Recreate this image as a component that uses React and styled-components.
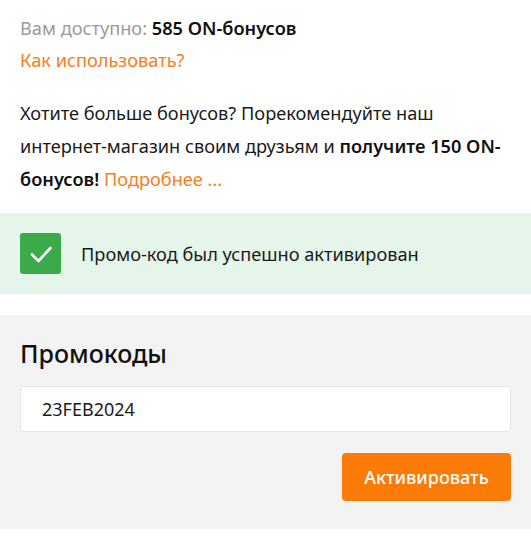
import React from "react";
import styled, { createGlobalStyle } from "styled-components";

const Global = createGlobalStyle`
  html, body { margin: 0; padding: 0; background: #fff; }
  body { font-family: "Noto Sans", "Open Sans", sans-serif; color: #1a1a1a; }
  * { box-sizing: border-box; }
`;

const Page = styled.div`
  width: 531px;
  display: flex;
  flex-direction: column;
`;

const Info = styled.section`
  padding: 12px 20px 17px;
`;

const Line = styled.div`
  font-size: 18.2px;
  line-height: 32px;
`;

const Muted = styled.span`
  color: #9a9a9a;
`;

const Strong = styled.span`
  font-weight: 600;
  color: #111;
`;

const Link = styled.a`
  color: #f57e1d;
  text-decoration: none;
`;

const Para = styled.p`
  margin: 21px 0 0;
  font-size: 18.2px;
  line-height: 33px;
  color: #1a1a1a;
`;

const Success = styled.div`
  background: #e6f5e9;
  height: 81px;
  padding: 0 20px;
  display: flex;
  align-items: center;
  gap: 20px;
`;

const CheckBox = styled.div`
  width: 41px;
  height: 41px;
  border-radius: 3px;
  background: #3aab48;
  display: flex;
  align-items: center;
  justify-content: center;
  flex-shrink: 0;
`;

const SuccessText = styled.span`
  font-size: 18.2px;
  color: #1a1a1a;
`;

const Promo = styled.section`
  margin-top: 21px;
  background: #f3f3f3;
  padding: 20px 20px 28px;
  display: flex;
  flex-direction: column;
`;

const Title = styled.h2`
  margin: 0;
  font-size: 25px;
  font-weight: 500;
  line-height: 36px;
  color: #111;
`;

const Input = styled.input`
  margin-top: 15px;
  height: 46px;
  width: 100%;
  border: 1px solid #e4e4e4;
  border-radius: 3px;
  background: #fff;
  padding: 0 21px;
  font-family: inherit;
  font-size: 18px;
  color: #1a1a1a;
  outline: none;
`;

const Actions = styled.div`
  margin-top: 21px;
  display: flex;
  justify-content: flex-end;
`;

const Button = styled.button`
  width: 169px;
  height: 48px;
  border: none;
  border-radius: 4px;
  background: #fb7b08;
  color: #fff;
  font-family: inherit;
  font-size: 18px;
  font-weight: 500;
  cursor: pointer;
`;

export default function App() {
  return (
    <Page>
      <Global />
      <Info>
        <Line>
          <Muted>Вам доступно: </Muted>
          <Strong>585 ON-бонусов</Strong>
        </Line>
        <Line>
          <Link href="#">Как использовать?</Link>
        </Line>
        <Para>
          Хотите больше бонусов? Порекомендуйте наш интернет-магазин своим друзьям и{" "}
          <Strong>получите 150 ON-бонусов!</Strong> <Link href="#">Подробнее ...</Link>
        </Para>
      </Info>
      <Success>
        <CheckBox>
          <svg width="24" height="24" viewBox="0 0 24 24" fill="none">
            <path d="M3 12.5 L9.5 19 L21.5 6" stroke="#fff" strokeWidth="2.6" strokeLinecap="round" strokeLinejoin="round" />
          </svg>
        </CheckBox>
        <SuccessText>Промо-код был успешно активирован</SuccessText>
      </Success>
      <Promo>
        <Title>Промокоды</Title>
        <Input defaultValue="23FEB2024" />
        <Actions>
          <Button>Активировать</Button>
        </Actions>
      </Promo>
    </Page>
  );
}
